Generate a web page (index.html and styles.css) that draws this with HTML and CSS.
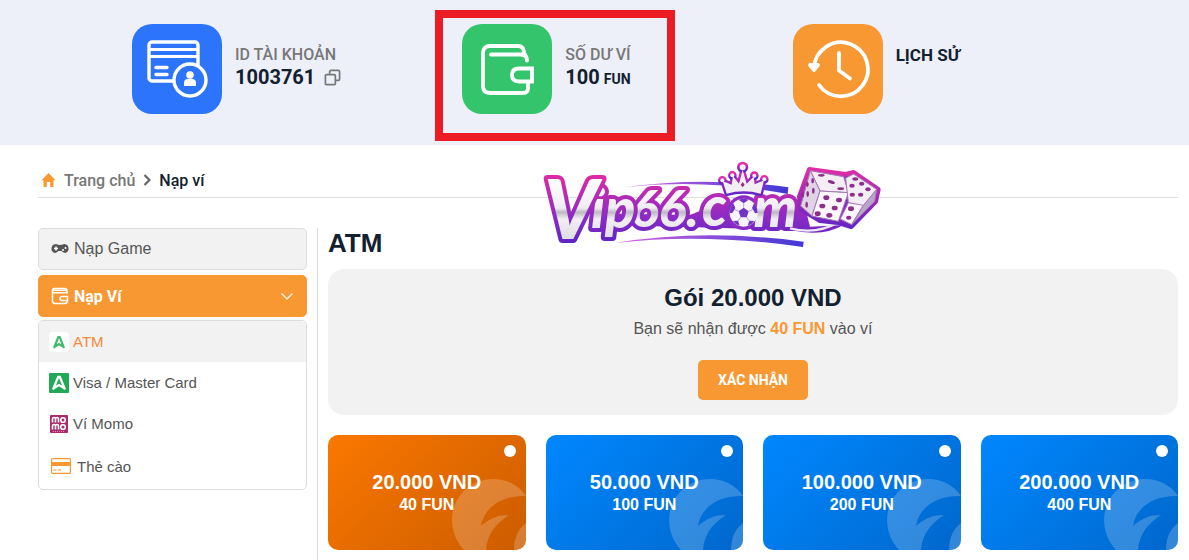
FILE: index.html
```
<!DOCTYPE html>
<html lang="vi">

<head>
    <meta charset="UTF-8">
    <meta name="viewport" content="width=device-width, initial-scale=1.0">
    <title>Nạp ví</title>
    <link rel="stylesheet" href="styles.css">
</head>

<body>
    <header class="account-bar">
        <div class="account-item">
            <div class="account-icon blue">
                <svg viewBox="0 0 90 90" fill="none" stroke="#fff" stroke-width="3.4" stroke-linecap="round">
                    <rect x="17" y="18" width="49" height="39" rx="3" />
                    <path d="M18 25.500h47M18 32.500h47" stroke-width="3.200" />
                    <path d="M24 43.500h11M24 50.500h11" />
                    <circle cx="58" cy="56" r="16" fill="#2c74fb" />
                    <circle cx="58" cy="51" r="3.800" fill="#fff" stroke="none" />
                    <path d="M52 62v-3q0-4 4-4h4q4 0 4 4v3z" fill="#fff" stroke="none" />
                </svg>
            </div>
            <div class="account-info">
                <div class="account-label">ID TÀI KHOẢN</div>
                <div class="account-value">
                    <span>1003761</span>
                    <button type="button" class="copy-btn" aria-label="Copy">
                        <svg viewBox="0 0 18 18" fill="none" stroke="#777" stroke-width="1.8">
                            <rect x="1.500" y="6" width="10.500" height="10.500" rx="1" />
                            <path d="M6 6V3q0-1.500 1.500-1.500H15q1.500 0 1.500 1.500v7.500q0 1.500-1.500 1.500h-3" />
                        </svg>
                    </button>
                </div>
            </div>
        </div>
        <div class="account-item highlighted">
            <div class="account-icon green">
                <svg viewBox="0 0 90 90" fill="none" stroke="#fff" stroke-width="3.8" stroke-linecap="round" stroke-linejoin="round">
                    <path d="M29 30.500h34M62 28q-.5-6-6-6H28q-7 0-7 7v33q0 7 7 7h33q5 0 5-5v-5" />
                    <path d="M60 30.500q5 .5 5 6" />
                    <path d="M70 44.500H57q-7 0-7 6.500t7 6.500h13z" stroke-linejoin="miter" />
                </svg>
            </div>
            <div class="account-info">
                <div class="account-label">SỐ DƯ VÍ</div>
                <div class="account-value">100<small>FUN</small></div>
            </div>
        </div>
        <div class="account-item">
            <div class="account-icon orange">
                <svg viewBox="0 0 90 90" fill="none" stroke="#fff" stroke-width="3.8" stroke-linecap="round" stroke-linejoin="round">
                    <path d="M21 44A27 27 0 1 1 26 61" />
                    <path d="M17 41l4 5 4-5z" fill="#fff" />
                    <path d="M46 29v17.500l11 8" />
                </svg>
            </div>
            <div class="account-info">
                <a href="#" class="history-link">LỊCH SỬ</a>
            </div>
        </div>
    </header>

    <main>
        <nav class="breadcrumb">
            <svg class="home-icon" viewBox="0 0 14 14" fill="#f79833">
                <path d="M7 0L14 7.300H12V14H8.700V9H5.300V14H2V7.300H0z" />
            </svg>
            <a href="#">Trang chủ</a>
            <svg class="arrow-icon" viewBox="0 0 8 12" fill="none" stroke="#666" stroke-width="2.2">
                <path d="M1.500 1L6.500 6L1.500 11" />
            </svg>
            <span>Nạp ví</span>
        </nav>

        <svg class="logo" viewBox="45 30 1020 270" role="img" aria-label="Vip66.com">
            <defs>
                <linearGradient id="edge" x1="0" y1="0" x2="0" y2="1">
                    <stop offset="0" stop-color="#e02da5" />
                    <stop offset="1" stop-color="#6326c6" />
                </linearGradient>
                <linearGradient id="edgeText" gradientUnits="userSpaceOnUse" x1="0" y1="80" x2="0" y2="280">
                    <stop offset="0" stop-color="#dc2ba5" />
                    <stop offset=".6" stop-color="#8d2bc4" />
                    <stop offset="1" stop-color="#5d24c2" />
                </linearGradient>
                <linearGradient id="silver" gradientUnits="userSpaceOnUse" x1="0" y1="85" x2="0" y2="270">
                    <stop offset="0" stop-color="#fff" />
                    <stop offset=".48" stop-color="#efedf2" />
                    <stop offset=".55" stop-color="#bdb8c2" />
                    <stop offset=".66" stop-color="#f1eff3" />
                    <stop offset="1" stop-color="#dedce4" />
                </linearGradient>
                <linearGradient id="swoosh" x1="0" y1="0" x2="1" y2="0">
                    <stop offset="0" stop-color="#d466e0" />
                    <stop offset="1" stop-color="#4337d5" />
                </linearGradient>
            </defs>
            <path d="M280 112Q520 78 775 112L773 132Q520 84 280 112z" fill="url(#swoosh)" />
            <path d="M255 279Q520 235 821 275L819 291Q520 248 255 279z" fill="url(#swoosh)" />

            <!-- purple body joining the word and the dice -->
            <path d="M180 190L480 195L540 170L700 150L820 150L840 230L940 225Q880 262 780 240L500 232L210 225z" fill="url(#edgeText)" />
            <circle cx="641" cy="188" r="52" fill="#8d2bc4" />
            <g class="logo-word">
                <text x="671" y="230" font-size="164">m</text>
                <text x="516" y="227" font-size="164">c</text>
                <text x="302" y="232" font-size="156">66.</text>
                <text x="183" y="234" font-size="168">ip</text>
                <text x="42" y="266" font-size="246">V</text>
            </g>
            <path d="M780 235Q860 255 925 217" fill="none" stroke="#eee8f4" stroke-width="7" />

            <!-- ball -->
            <circle cx="641" cy="188" r="42" fill="#f7f4fa" />
            <g fill="#7133c8">
                <path d="M641 173l15 11-6 18h-18l-6-18z" />
                <path d="M626 149q15-6 30 0l-15 11z" />
                <path d="M601 174q3-10 9-14l6 14-9 15h-8z" />
                <path d="M681 174q-3-10-9-14l-6 14 9 15h8z" />
                <path d="M609 213l15-1 5 15q-13-3-20-14z" />
                <path d="M673 213l-15-1-5 15q13-3 20-14z" />
            </g>
            <path d="M641 173v-13M656 184l12-5M650 202l8 12M632 202l-8 12M626 184l-12-5" stroke="#9a75cf" stroke-width="2" />

            <!-- crown -->
            <g stroke="url(#edge)" stroke-width="14" stroke-linejoin="round" fill="#f3edf5">
                <path d="M590 131L578 93L605 104L609 78L627 101L638 60L650 101L671 80L674 103L702 91L692 131Q641 117 590 131z" />
                <circle cx="638" cy="52" r="10" />
                <circle cx="607" cy="76" r="6" />
                <circle cx="673" cy="77" r="6" />
                <circle cx="577" cy="91" r="6" />
                <circle cx="703" cy="88" r="6" />
            </g>
            <g fill="#f3edf5">
                <path d="M590 131L578 93L605 104L609 78L627 101L638 60L650 101L671 80L674 103L702 91L692 131Q641 117 590 131z" />
                <circle cx="638" cy="52" r="9" />
                <circle cx="607" cy="76" r="6" />
                <circle cx="673" cy="77" r="6" />
                <circle cx="577" cy="91" r="6" />
                <circle cx="703" cy="88" r="6" />
            </g>
            <path d="M638 96l6 8-6 8-6-8z" fill="#8b377d" />

            <!-- dice -->
            <path d="M838 58L947 73L971 67L1045 118L1037 155L964 230L925 218L870 212L812 178L808 140z" fill="#8a2ac2" stroke="url(#edge)" stroke-width="14" stroke-linejoin="round" />
            <g stroke="#a578b5" stroke-width="3" stroke-linejoin="round">
                <path d="M841 62L941 80L955 128L870 123z" fill="#f4edf5" />
                <path d="M841 62L870 123L846 198L812 168z" fill="#dfd4e6" />
                <path d="M870 123L955 128L925 214L846 198z" fill="#faf6fb" />
                <path d="M947 84L971 72L1040 118L1000 170L955 158z" fill="#f3edf6" />
                <path d="M955 158L1000 166L965 224L931 207z" fill="#faf6fb" />
                <path d="M1040 118L1034 154L965 224L1000 166z" fill="#b9a5c8" />
            </g>
            <g fill="#8c2f88">
                <ellipse cx="874" cy="76" rx="10" ry="4" />
                <ellipse cx="904" cy="96" rx="11" ry="5" transform="rotate(20 904 96)" />
                <ellipse cx="932" cy="116" rx="10" ry="4" />
                <ellipse cx="848" cy="92" rx="4" ry="8" />
                <ellipse cx="832" cy="103" rx="4" ry="8" />
                <ellipse cx="850" cy="122" rx="4" ry="9" />
                <ellipse cx="833" cy="132" rx="4" ry="9" />
                <ellipse cx="818" cy="135" rx="4" ry="8" />
                <ellipse cx="830" cy="164" rx="4" ry="9" />
                <ellipse cx="889" cy="143" rx="9" ry="7" />
                <ellipse cx="927" cy="150" rx="9" ry="7" />
                <ellipse cx="877" cy="168" rx="9" ry="7" />
                <ellipse cx="914" cy="174" rx="9" ry="7" />
                <ellipse cx="863" cy="191" rx="9" ry="7" />
                <ellipse cx="898" cy="196" rx="9" ry="7" />
                <ellipse cx="976" cy="87" rx="9" ry="5" />
                <ellipse cx="966" cy="107" rx="8" ry="6" />
                <ellipse cx="995" cy="101" rx="8" ry="6" />
                <ellipse cx="1014" cy="118" rx="8" ry="6" />
                <ellipse cx="967" cy="134" rx="8" ry="6" />
                <ellipse cx="992" cy="134" rx="8" ry="6" />
                <ellipse cx="963" cy="176" rx="9" ry="7" />
                <ellipse cx="956" cy="203" rx="8" ry="6" />
            </g>
        </svg>

        <div class="layout">
            <aside class="sidebar">
                <a href="#" class="menu-item">
                    <svg viewBox="0 0 18 12">
                        <path d="M5 1Q9 3 13 1Q18 1 17.500 7Q16 11 12.500 9.500L10.500 8h-3L5.500 9.500Q2 11 .5 7Q0 1 5 1z" fill="#555" />
                        <path d="M5 3.500v4M3 5.500h4" stroke="#fff" stroke-width="1.5" />
                        <path d="M12 7h.01M14.500 5h.01" stroke="#fff" stroke-width="2" stroke-linecap="round" />
                    </svg>
                    Nạp Game
                </a>
                <button type="button" class="menu-item active">
                    <svg viewBox="0 0 18 18" fill="none" stroke="#fff" stroke-width="1.5">
                        <path d="M16 6.500V4Q16 1.500 13.500 1.500h-10Q1.500 1.500 1.500 4v9.500Q1.500 16.500 4 16.500h9.500Q16.500 16.500 16.500 13.500v-4h-5q-2.500 0-2.500 2t2.500 2h5" />
                        <path d="M2 3.300h13.500M2 5.800h14" />
                    </svg>
                    <span>Nạp Ví</span>
                    <svg class="chevron" viewBox="0 0 12 7" fill="none" stroke="#fff" stroke-width="1.2">
                        <path d="M.5.5L6 6L11.500.5" />
                    </svg>
                </button>
                <div class="submenu">
                    <a href="#" class="submenu-item selected">
                        <svg viewBox="0 0 20 20">
                            <rect width="20" height="20" rx="4" fill="#fff" />
                            <path d="M5 16L9.300 5h1.400L15 16M6 14.500L10 12l4 2.500" fill="none" stroke="#42b96d" stroke-width="2.2" />
                        </svg>
                        ATM
                    </a>
                    <a href="#" class="submenu-item">
                        <svg viewBox="0 0 20 20">
                            <rect width="20" height="20" rx="1" fill="#22a958" />
                            <path d="M4 16.500L9.200 4h1.600L16 16.500M5 15L10 12l5 3" fill="none" stroke="#fff" stroke-width="2.300" />
                        </svg>
                        Visa / Master Card
                    </a>
                    <a href="#" class="submenu-item">
                        <svg viewBox="0 0 20 20">
                            <rect x="1" y="1" width="18" height="18" rx="1" fill="#a92b6c" />
                            <g fill="none" stroke="#fff" stroke-width="1.600">
                                <path d="M3.500 8.500V5q0-1.500 1.500-1.500T6.500 5v3.500M6.500 5q0-1.500 1.500-1.500T9.500 5v3.500" />
                                <circle cx="14" cy="6" r="2.300" />
                                <path d="M3.500 15.500V12q0-1.500 1.500-1.500t1.500 1.500v3.500M6.500 12q0-1.500 1.500-1.500t1.500 1.500v3.500" />
                                <circle cx="14" cy="13" r="2.300" />
                            </g>
                            <path d="M4 17.500h12" stroke="#d78eb4" stroke-dasharray="1 1" />
                        </svg>
                        Ví Momo
                    </a>
                    <a href="#" class="submenu-item scratch">
                        <svg viewBox="0 0 20 16">
                            <rect x=".6" y=".6" width="18.800" height="14.800" rx="1" fill="#fff" stroke="#f79833" stroke-width="1.200" />
                            <path d="M1 6h18" stroke="#f79833" stroke-width="4" />
                            <path d="M2.500 12h3M7 12h3" stroke="#f79833" />
                        </svg>
                        Thẻ cào
                    </a>
                </div>
            </aside>

            <section class="content">
                <h1>ATM</h1>
                <div class="summary">
                    <h2>Gói 20.000 VND</h2>
                    <p>Bạn sẽ nhận được <strong>40 FUN</strong> vào ví</p>
                    <button type="button" class="confirm-btn">XÁC NHẬN</button>
                </div>
                <div class="packages">
                    <label class="package">
                        <input type="radio" name="package" checked>
                        <span class="price">20.000 VND</span>
                        <span class="fun">40 FUN</span>
                        <svg class="bird" viewBox="0 0 74 71"><use href="#bird" /></svg>
                    </label>
                    <label class="package">
                        <input type="radio" name="package">
                        <span class="price">50.000 VND</span>
                        <span class="fun">100 FUN</span>
                        <svg class="bird" viewBox="0 0 74 71"><use href="#bird" /></svg>
                    </label>
                    <label class="package">
                        <input type="radio" name="package">
                        <span class="price">100.000 VND</span>
                        <span class="fun">200 FUN</span>
                        <svg class="bird" viewBox="0 0 74 71"><use href="#bird" /></svg>
                    </label>
                    <label class="package">
                        <input type="radio" name="package">
                        <span class="price">200.000 VND</span>
                        <span class="fun">400 FUN</span>
                        <svg class="bird" viewBox="0 0 74 71"><use href="#bird" /></svg>
                    </label>
                </div>
            </section>
        </div>
    </main>

    <svg class="symbols" width="0" height="0">
        <symbol id="bird" viewBox="0 0 74 71">
            <path d="M12 71C-3 55-4 30 10 14C28-6 60-4 74 17C52 16 32 27 29 47C38 39 46 36 57 36C43 45 35 56 34 71z" />
            <path d="M74 44C66 50 62 59 62 71h12z" />
        </symbol>
    </svg>
</body>

</html>
```
FILE: styles.css
```
*,
*::after {
    box-sizing: border-box;
}

body {
    font-family: "Liberation Sans", Arial, sans-serif;
    font-size: 16px;
    color: #555;
    background: #fff;
    margin: 0;
}

a {
    color: inherit;
    text-decoration: none;
}

button {
    font-family: inherit;
    border: none;
    cursor: pointer;
}

svg {
    display: block;
    flex-shrink: 0;
}

h1,
h2,
p {
    margin: 0;
}

.account-bar {
    display: grid;
    grid-template-columns: repeat(3, 1fr);
    background: #edf0f9;
    padding: 24px 66px 31px 132px;
    font-family: Roboto, sans-serif;
}

.account-item {
    position: relative;
    display: flex;
    gap: 13px;
}

.highlighted::after {
    content: "";
    position: absolute;
    left: -27px;
    top: -14px;
    width: 240px;
    height: 131px;
    border: 8px solid #eb1c24;
}

.account-icon {
    width: 90px;
    height: 90px;
    border-radius: 20px;
}

.blue {
    background: #2c74fb;
}

.green {
    background: #34c46b;
}

.orange {
    background: #f79833;
}

.account-info {
    padding-top: 20px;
}

.account-label,
.history-link {
    font-size: 16px;
    line-height: 22px;
    font-weight: 500;
    color: #777;
}

.history-link {
    font-size: 17px;
    font-weight: 700;
    color: #13202f;
}

.account-value {
    display: flex;
    align-items: baseline;
    gap: 4px;
    font-size: 20px;
    line-height: 22px;
    font-weight: 700;
    color: #13202f;
}

.account-value small {
    font-size: 14px;
}

.copy-btn {
    align-self: center;
    background: none;
    padding: 0;
    margin-left: 5px;
}

.copy-btn svg {
    width: 17px;
    height: 17px;
}

main {
    position: relative;
    padding: 18px 11px 0 38px;
}

.breadcrumb {
    display: flex;
    align-items: center;
    gap: 8px;
    padding: 0 3px;
    height: 35px;
    border-bottom: 1px solid #ddd;
    font-family: Roboto, sans-serif;
    font-weight: 500;
    color: #777;
}

.breadcrumb span {
    color: #13202f;
}

.home-icon {
    width: 15px;
    height: 14px;
}

.arrow-icon {
    width: 8px;
    height: 12px;
}

.logo {
    position: absolute;
    left: 545px;
    top: 15px;
    width: 340px;
    height: 90px;
    overflow: visible;
}

.logo-word {
    font-family: Lato, sans-serif;
    font-weight: 900;
    font-style: italic;
    fill: url(#silver);
    stroke: url(#edgeText);
    stroke-width: 24;
    stroke-linejoin: round;
    paint-order: stroke;
}

.layout {
    display: flex;
    padding-top: 30px;
}

.sidebar {
    width: 280px;
    padding-right: 10px;
    border-right: 1px solid #ddd;
    flex-shrink: 0;
}

.menu-item {
    display: flex;
    align-items: center;
    gap: 5px;
    width: 100%;
    height: 42px;
    padding: 0 13px 0 12px;
    margin-bottom: 5px;
    border: 1px solid #ddd;
    border-radius: 5px;
    background: #f2f2f2;
    font-size: 16px;
    text-align: left;
}

.menu-item svg {
    width: 18px;
}

.menu-item.active {
    font-family: Roboto, sans-serif;
    font-weight: 700;
    color: #fff;
    background: #f79833;
    border-color: #f79833;
    margin-bottom: 3px;
}

.menu-item .chevron {
    width: 12px;
    margin-left: auto;
}

.submenu {
    border: 1px solid #ddd;
    border-radius: 5px;
    padding-bottom: 1px;
    font-size: 15px;
    overflow: hidden;
}

.submenu-item {
    display: flex;
    align-items: center;
    gap: 4px;
    height: 41px;
    padding: 0 10px;
}

.submenu-item svg {
    width: 20px;
}

.submenu-item.selected {
    color: #f58a3c;
    background: #f2f2f2;
}

.submenu-item.scratch {
    height: 44px;
    gap: 6px;
    padding-left: 12px;
}

.content {
    flex: 1;
    padding-left: 10px;
    padding-bottom: 20px;
}

.content h1 {
    font-size: 26px;
    line-height: 30px;
    color: #13202f;
    margin-bottom: 11px;
}

.summary {
    background: #f2f2f2;
    border-radius: 16px;
    padding: 15px;
    margin-bottom: 20px;
    text-align: center;
}

.summary h2 {
    font-size: 24px;
    line-height: 28px;
    color: #13202f;
}

.summary p {
    line-height: 24px;
    margin: 5px 0 19px;
}

.summary strong {
    color: #f79833;
}

.confirm-btn {
    height: 40px;
    padding: 0 20px;
    border-radius: 5px;
    background: #f79833;
    color: #fff;
    font-family: Roboto, sans-serif;
    font-size: 14px;
    font-weight: 700;
}

.packages {
    display: grid;
    grid-template-columns: repeat(4, 1fr);
    gap: 20px;
}

.package {
    position: relative;
    display: flex;
    flex-direction: column;
    align-items: center;
    justify-content: center;
    height: 115px;
    border-radius: 10px;
    background: linear-gradient(135deg, #0087ff, #0068cc);
    color: #fff;
    font-weight: 700;
    overflow: hidden;
    cursor: pointer;
}

.package:has(input:checked) {
    background: linear-gradient(135deg, #fa7800, #cc5c00);
}

.package input {
    appearance: none;
    position: absolute;
    top: 10px;
    right: 10px;
    width: 12px;
    height: 12px;
    margin: 0;
    border-radius: 50%;
    background: #fff;
}

.price {
    font-size: 20px;
    line-height: 24px;
}

.fun {
    font-size: 16px;
    line-height: 22px;
}

.bird {
    position: absolute;
    right: 0;
    bottom: 0;
    width: 74px;
    height: 71px;
    fill: #fff;
    opacity: 0.2;
}

.symbols {
    position: absolute;
}
```
